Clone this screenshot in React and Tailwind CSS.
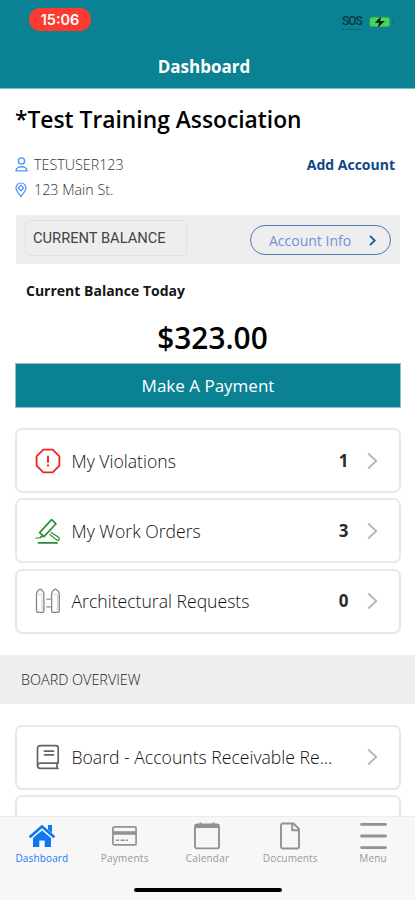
import React from "react";

function Chevron() {
  return (
    <svg className="h-[18px] w-[11px] shrink-0" viewBox="0 0 11 18" fill="none" stroke="#b9b9b9" strokeWidth="2">
      <path d="M1.2 1.5L9.2 9L1.2 16.5" />
    </svg>
  );
}

function ViolationIcon() {
  return (
    <svg className="h-[26px] w-[26px]" viewBox="0 0 26 26" fill="none" stroke="#fa1e24" strokeWidth="1.8">
      <path d="M8.3 1.6H17.7L24.4 8.3V17.7L17.7 24.4H8.3L1.6 17.7V8.3Z" strokeLinejoin="round" />
      <path d="M13 7.8V14.8M13 16.6V18.6" strokeWidth="1.9" />
    </svg>
  );
}

function WorkOrderIcon() {
  return (
    <svg className="h-[26px] w-[26px]" viewBox="0 0 26 26" fill="none" stroke="#1f8f32" strokeWidth="1.6" strokeLinejoin="round" strokeLinecap="round">
      <path d="M4.6 14.6L16.6 1.6L21 5.8L9 18.6Z" />
      <path d="M3.5 24.9H22.2" />
      <path d="M1 20.1H4" stroke="#7fb98a" />
      <path d="M5.2 19.6L7.6 17.6" />
      <path d="M16.2 14.4L23.6 19.2C25.2 20.8 23.8 23 21.8 22L14.8 16.6" strokeWidth="1.2" />
      <path d="M16.4 17.2L20.6 20.6" stroke="#8ec297" strokeWidth="0.9" />
    </svg>
  );
}

function ArchitectureIcon() {
  return (
    <svg className="h-[26px] w-[26px]" viewBox="0 0 26 26" fill="none" stroke="#868686" strokeWidth="1.3" strokeLinejoin="round">
      <path d="M1.5 6C1.7 3.8 3 2 5.2 1C7.4 2 8.7 3.8 8.9 6V22.5Q8.9 24.4 7 24.4H3.4Q1.5 24.4 1.5 22.5Z" />
      <path d="M16.6 6C16.8 3.8 18.2 2 20.4 1C22.6 2 24.1 3.8 24.3 6V22.5Q24.3 24.4 22.4 24.4H18.5Q16.6 24.4 16.6 22.5Z" />
      <path d="M3.4 6.5H7M18.6 6.5H22.4M7 7V22.5M22.4 7V22.5" stroke="#c4c4c4" strokeWidth="0.8" />
      <path d="M11.4 11.2H15.6M11.4 18.8H15.6" />
    </svg>
  );
}

function BookIcon() {
  return (
    <svg className="h-[26px] w-[26px]" viewBox="0 0 26 26" fill="none" stroke="#646464" strokeWidth="1.7" strokeLinejoin="round" strokeLinecap="round">
      <path d="M5.5 1.6H20.8Q23.2 1.6 23.2 4V19.1H5.2Q2.5 19.2 2.5 21.6V4.4Q2.5 1.6 5.5 1.6Z" />
      <path d="M2.5 21.4Q2.5 24.3 5.2 24.3H23M22 19.3V24" />
      <path d="M9.5 7.2H18.5M9.5 10.8H18.5" />
    </svg>
  );
}

function Row({ icon, label, count }) {
  return (
    <div className="flex h-[65px] items-center rounded-[7px] border-2 border-[#e8e8e8] bg-white pl-[18px] pr-[21.5px]">
      <span className="w-[36.5px] shrink-0">{icon}</span>
      <span className="grow whitespace-nowrap text-[17.6px] font-light leading-6 text-[#111]">{label}</span>
      {count && <span className="mr-[18px] text-[17px] font-bold leading-6 text-[#2a2a2a]">{count}</span>}
      <Chevron />
    </div>
  );
}

function Tab({ icon, label, color, tracking }) {
  return (
    <div className={`flex w-[82.8px] flex-col items-center ${color}`}>
      <span className="flex h-[30px] items-center">{icon}</span>
      <span className={`whitespace-nowrap text-[10px] leading-[14px] ${tracking}`}>{label}</span>
    </div>
  );
}

export default function App() {
  return (
    <div className="flex h-[900px] w-[415px] flex-col overflow-hidden bg-white font-['Open_Sans','Noto_Sans',sans-serif]">
      <header className="flex h-[89px] shrink-0 flex-col border-b border-[#7fbcc6] bg-[#0b8294]">
        <div className="flex h-[46px] items-start justify-between pl-[29px] pr-[21px] pt-[8px]">
          <div className="flex h-[23px] w-[62px] items-center justify-center rounded-full bg-[#fc3a30] font-[Inter,sans-serif] text-[14.5px] font-semibold text-white">15:06</div>
          <div className="flex items-center gap-[6px] pt-[6px]">
            <span className="border-b border-dotted border-[#075460] font-[Roboto,sans-serif] text-[12px] font-medium leading-[15px] tracking-[-0.9px] text-[#063c45]">SOS</span>
            <svg className="h-[14px] w-[26px]" viewBox="0 0 26 14">
              <rect x=".5" y="1" width="22.5" height="12" rx="3.5" fill="#238d77" stroke="#287888" />
              <rect x="2" y="2.5" width="19.5" height="9" rx="2" fill="#40d85b" />
              <path d="M24 4.8Q25.8 7 24 9.2Z" fill="#096473" />
              <path d="M13 1.5L6.8 7.8H11L9.8 12.5L16.8 6H12.2Z" fill="#061913" />
            </svg>
          </div>
        </div>
        <h1 className="ml-[-7px] mt-[9px] text-center text-[17px] font-bold leading-6 text-white">Dashboard</h1>
      </header>

      <main className="flex h-[727px] shrink-0 flex-col overflow-hidden">
        <h2 className="mt-[16px] whitespace-nowrap pl-[15px] text-[22.8px] font-semibold leading-[30px] text-black">*Test Training Association</h2>
        <div className="mt-[18px] flex justify-between pl-[15px] pr-[20px]">
          <div className="flex flex-col text-[14.3px] font-light leading-[24.5px] text-[#333]">
            <div className="flex items-center gap-[6px]">
              <svg className="h-[16px] w-[13px]" viewBox="0 0 13 16" fill="none" stroke="#4b94f7" strokeWidth="1.4">
                <circle cx="6.5" cy="4" r="3.1" />
                <path d="M1 13.9C1 8.4 12 8.4 12 13.9Z" strokeLinejoin="round" />
              </svg>
              <span>TESTUSER123</span>
            </div>
            <div className="flex items-center gap-[7px]">
              <svg className="h-[16px] w-[12px]" viewBox="0 0 12 16" fill="none" stroke="#4b94f7" strokeWidth="1.2">
                <path d="M6 14.6C4.6 12.2 1 8.5 1 5.9A5 4.9 0 0 1 11 5.9C11 8.5 7.4 12.2 6 14.6Z" />
                <path d="M6 3.2L8.7 6L6 8.8L3.3 6Z" />
              </svg>
              <span>123 Main St.</span>
            </div>
          </div>
          <span className="text-[14px] font-bold leading-[24px] text-[#104589]">Add Account</span>
        </div>

        <div className="ml-[16px] mr-[15px] mt-[13px] flex h-[49px] shrink-0 items-center justify-between bg-[#eee] pl-[9px] pr-[9px]">
          <div className="mb-[4px] flex h-[36px] w-[162px] items-center rounded-[5px] border border-[#e2e2e2] pl-[7px] pt-px font-[Roboto,sans-serif] text-[14.7px] text-[#444]">CURRENT BALANCE</div>
          <div className="mt-[1px] flex h-[30px] w-[141px] items-center justify-between rounded-full border border-[#4d78aa] pl-[18px] pr-[14px]">
            <span className="text-[14px] text-[#6f90dd]">Account Info</span>
            <svg className="h-[11px] w-[7px]" viewBox="0 0 7 11" fill="none" stroke="#1b6093" strokeWidth="1.9"><path d="M1 .8L5.7 5.5L1 10.2" /></svg>
          </div>
        </div>
        <div className="mt-[17px] pl-[26px] text-[14px] font-bold leading-5 text-[#161616]">Current Balance Today</div>
        <div className="mt-[18px] pl-[10px] text-center text-[29.8px] font-semibold leading-[38px] text-black">$323.00</div>
        <button className="ml-[15px] mr-[14px] mt-[6px] h-[45px] shrink-0 border border-[#8bc4cc] bg-[#0b8294] pt-px text-[17px] text-white">Make A Payment</button>

        <div className="ml-[15px] mr-[14px] mt-[20px] flex shrink-0 flex-col gap-[5.3px]">
          <Row icon={<ViolationIcon />} label="My Violations" count="1" />
          <Row icon={<WorkOrderIcon />} label="My Work Orders" count="3" />
          <Row icon={<ArchitectureIcon />} label="Architectural Requests" count="0" />
        </div>
        <div className="mt-[21.4px] flex h-[49px] shrink-0 items-center bg-[#eee] pl-[21px] text-[14.4px] font-light text-[#222]">BOARD OVERVIEW</div>
        <div className="ml-[15px] mr-[14px] mt-[21px] flex shrink-0 flex-col gap-[5px]">
          <Row icon={<BookIcon />} label="Board - Accounts Receivable Re..." />
          <div className="h-[65px] rounded-[7px] border-2 border-[#e8e8e8]" />
        </div>
      </main>

      <footer className="flex h-[84px] shrink-0 flex-col items-center border-t border-[#ececec] bg-[#f7f7f7]">
        <nav className="flex w-[414px] pt-[4px]">
          <Tab color="text-[#1777f2]" tracking="tracking-[0.15px]" label="Dashboard" icon={
            <svg className="h-[24px] w-[28px]" viewBox="0 0 28 24" fill="#0d78f2">
              <path d="M14 .8L27.3 12.2L25.5 14.2L14 4.3L2.5 14.2L.7 12.2Z" />
              <path d="M20 1H24V9L20 5.5Z" />
              <path d="M5 14.1L14 6.4L23 14.1V23H16.7V16.5H11.3V23H5Z" />
            </svg>} />
          <Tab color="text-[#999]" tracking="tracking-[0.25px]" label="Payments" icon={
            <svg className="h-[20px] w-[25px]" viewBox="0 0 25 20" fill="none" stroke="#929292" strokeWidth="1.7">
              <rect x=".9" y=".9" width="23.2" height="18" rx="1.5" />
              <path d="M1 7H24" strokeWidth="3.6" />
              <path d="M4 14.2H7M8.5 14.2H13M14 14.2H16" strokeWidth="1.5" />
            </svg>} />
          <Tab color="text-[#999]" tracking="tracking-[0.2px]" label="Calendar" icon={
            <svg className="h-[28px] w-[26px]" viewBox="0 0 26 28" fill="none" stroke="#929292" strokeWidth="1.9">
              <rect x="1" y="2.4" width="24" height="24" rx="2" />
              <path d="M1.5 4.2H24.5" strokeWidth="3.7" />
              <path d="M6.5 .5V3M19.5 .5V3" strokeWidth="2" />
            </svg>} />
          <Tab color="text-[#999]" tracking="tracking-[0.15px]" label="Documents" icon={
            <svg className="h-[28px] w-[20px]" viewBox="0 0 20 28" fill="none" stroke="#929292" strokeWidth="1.9" strokeLinejoin="round">
              <path d="M3 1.5H13.5L19 7V24.5Q19 26.5 17 26.5H3Q1 26.5 1 24.5V3.5Q1 1.5 3 1.5Z" />
              <path d="M12.2 1.8V8.3H18.8" />
            </svg>} />
          <Tab color="text-[#999]" tracking="tracking-[0.2px]" label="Menu" icon={
            <svg className="h-[28px] w-[27px]" viewBox="0 0 27 28" stroke="#929292" strokeWidth="2.8" strokeLinecap="round"><path d="M1.5 2.4H25.5M1.5 14H25.5M1.5 25.6H25.5" /></svg>} />
        </nav>
        <div className="mt-[23px] h-[4px] w-[148px] rounded-full bg-black" />
      </footer>
    </div>
  );
}
